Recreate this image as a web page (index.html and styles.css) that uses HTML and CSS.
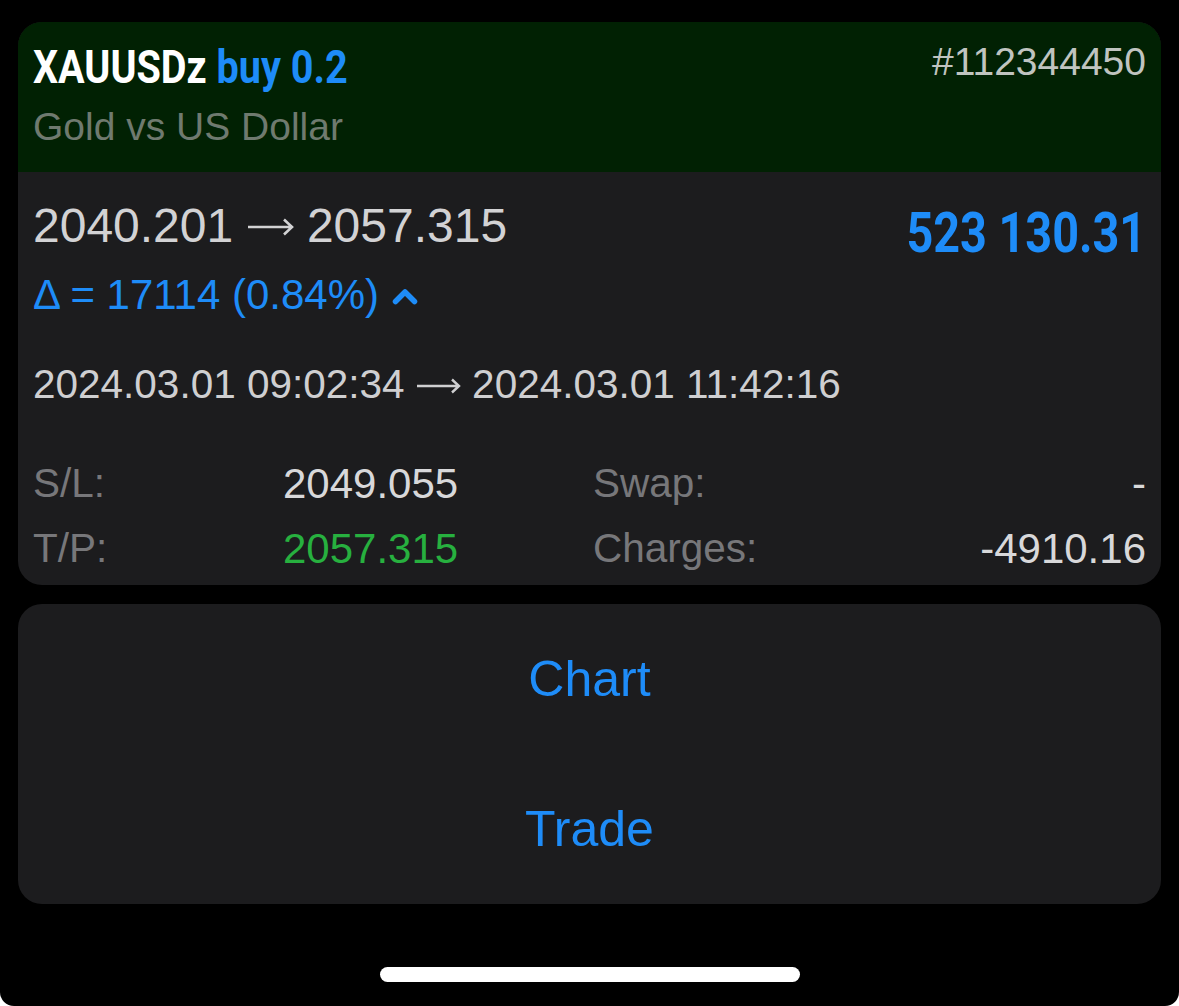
FILE: index.html
```html
<!DOCTYPE html>
<html>
<head>
<meta charset="utf-8">
<title>Position XAUUSDz</title>
<link rel="stylesheet" href="styles.css">
</head>
<body>
<div class="screen">

  <div class="position">
    <div class="head">
      <div class="head-left">
        <div class="symbol"><span class="cond">XAUUSDz <span class="side">buy 0.2</span></span></div>
        <div class="desc">Gold vs US Dollar</div>
      </div>
      <div class="ticket">#112344450</div>
    </div>

    <div class="details">
      <div class="price-row">
        <div class="prices">2040.201 <svg class="arrow big" width="47" height="20" viewBox="0 0 47 20"><path d="M1 10H45M37 2.5L45 10L37 17.5" fill="none" stroke="#d2d2d4" stroke-width="2.6"/></svg> 2057.315</div>
        <div class="profit"><span class="cond-r">523 130.31</span></div>
      </div>
      <div class="delta">&Delta; = 17114 (0.84%)
        <svg class="chevron" width="26" height="20" viewBox="0 0 26 20">
          <polyline points="3.5,15.5 13,6 22.5,15.5" fill="none" stroke="#1e8cf8" stroke-width="5.5" stroke-linecap="round" stroke-linejoin="round"/>
        </svg>
      </div>
      <div class="times">2024.03.01 09:02:34 <svg class="arrow" width="45" height="20" viewBox="0 0 45 20"><path d="M1 10H43M36 3.5L43 10L36 16.5" fill="none" stroke="#cfcfd1" stroke-width="2.4"/></svg> 2024.03.01 11:42:16</div>

      <div class="stats">
        <div class="label">S/L:</div>
        <div class="value">2049.055</div>
        <div class="pair"><span class="label">Swap:</span><span class="value">-</span></div>
        <div class="label">T/P:</div>
        <div class="value green">2057.315</div>
        <div class="pair"><span class="label">Charges:</span><span class="value">-4910.16</span></div>
      </div>
    </div>
  </div>

  <div class="actions">
    <div class="action">Chart</div>
    <div class="action">Trade</div>
  </div>

  <div class="home-bar"></div>
</div>
</body>
</html>
```

FILE: styles.css
```css
html {
	background: #fff;
}
body {
	margin: 0;
	font-family: "Liberation Sans", Arial, sans-serif;
}
.screen {
	height: 1006px;
	box-sizing: border-box;
	background: #000;
	border-radius: 0 0 14px 14px;
	padding: 22px 18px 0;
	display: flex;
	flex-direction: column;
}

/* position card */
.position {
	background: #1c1c1e;
	border-radius: 24px;
	overflow: hidden;
	height: 563px;
}
.head {
	background: #012103;
	height: 150px;
	box-sizing: border-box;
	padding: 0 15px;
	display: flex;
	justify-content: space-between;
	align-items: flex-start;
}
.symbol {
	margin-top: 22px;
	height: 46px;
	font-family: Roboto, sans-serif;
	font-weight: bold;
	font-size: 46px;
	line-height: 46px;
	color: #fff;
	white-space: nowrap;
}
.cond {
	display: inline-block;
	transform: scaleX(0.86);
	transform-origin: left center;
}
.side {
	color: #1e8cf8;
}
.desc {
	margin-top: 17px;
	font-size: 39px;
	line-height: 39px;
	color: #6f7a6f;
}
.ticket {
	margin-top: 20px;
	font-size: 39px;
	line-height: 40px;
	color: #c0c4c0;
}

.details {
	padding: 30px 15px 0;
}
.price-row {
	display: flex;
	justify-content: space-between;
	align-items: flex-start;
}
.prices {
	font-size: 48px;
	line-height: 48px;
	color: #d2d2d4;
}
.arrow {
	vertical-align: 2px;
}
.arrow.big {
	vertical-align: 5px;
}
.profit {
	margin-top: 3px;
	font-family: Roboto, sans-serif;
	font-weight: bold;
	font-size: 56px;
	line-height: 56px;
	color: #1e8cf8;
	white-space: nowrap;
}
.cond-r {
	display: inline-block;
	transform: scaleX(0.835);
	transform-origin: right center;
}
.delta {
	margin-top: 14px;
	font-size: 42px;
	line-height: 40px;
	color: #1e8cf8;
	display: flex;
	align-items: center;
}
.chevron {
	margin-left: 13px;
	margin-top: 2px;
}
.times {
	margin-top: 49px;
	font-size: 40.5px;
	line-height: 40px;
	color: #cfcfd1;
}

.stats {
	margin-top: 47px;
	display: grid;
	grid-template-columns: 250px 174px 1fr;
	font-size: 40.5px;
	line-height: 65px;
}
.label {
	color: #77777a;
}
.value {
	font-size: 42px;
	color: #d8d8da;
	text-align: right;
}
.value.green {
	color: #27b03f;
}
.pair {
	padding-left: 136px;
	display: flex;
	justify-content: space-between;
}

/* action buttons */
.actions {
	margin-top: 19px;
	background: #1c1c1e;
	border-radius: 24px;
	display: flex;
	flex-direction: column;
}
.action {
	height: 150px;
	display: flex;
	align-items: center;
	justify-content: center;
	font-size: 50px;
	color: #1e8cf8;
}

.home-bar {
	margin: 63px auto 0;
	width: 420px;
	height: 15px;
	border-radius: 8px;
	background: #fff;
}
```
